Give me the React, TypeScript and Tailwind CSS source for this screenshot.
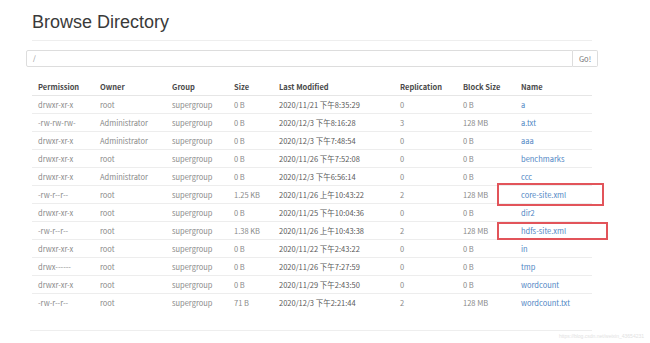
import React from "react";

interface Entry {
  permission: string;
  owner: string;
  group: string;
  size: string;
  modified: string;
  replication: string;
  blockSize: string;
  name: string;
  marked?: "wide" | "wider";
}

const entries: Entry[] = [
  { permission: "drwxr-xr-x", owner: "root", group: "supergroup", size: "0 B", modified: "2020/11/21 下午8:35:29", replication: "0", blockSize: "0 B", name: "a" },
  { permission: "-rw-rw-rw-", owner: "Administrator", group: "supergroup", size: "0 B", modified: "2020/12/3 下午8:16:28", replication: "3", blockSize: "128 MB", name: "a.txt" },
  { permission: "drwxr-xr-x", owner: "Administrator", group: "supergroup", size: "0 B", modified: "2020/12/3 下午7:48:54", replication: "0", blockSize: "0 B", name: "aaa" },
  { permission: "drwxr-xr-x", owner: "root", group: "supergroup", size: "0 B", modified: "2020/11/26 下午7:52:08", replication: "0", blockSize: "0 B", name: "benchmarks" },
  { permission: "drwxr-xr-x", owner: "Administrator", group: "supergroup", size: "0 B", modified: "2020/12/3 下午6:56:14", replication: "0", blockSize: "0 B", name: "ccc" },
  { permission: "-rw-r--r--", owner: "root", group: "supergroup", size: "1.25 KB", modified: "2020/11/26 上午10:43:22", replication: "2", blockSize: "128 MB", name: "core-site.xml", marked: "wide" },
  { permission: "drwxr-xr-x", owner: "root", group: "supergroup", size: "0 B", modified: "2020/11/25 下午10:04:36", replication: "0", blockSize: "0 B", name: "dir2" },
  { permission: "-rw-r--r--", owner: "root", group: "supergroup", size: "1.38 KB", modified: "2020/11/26 上午10:43:38", replication: "2", blockSize: "128 MB", name: "hdfs-site.xml", marked: "wider" },
  { permission: "drwxr-xr-x", owner: "root", group: "supergroup", size: "0 B", modified: "2020/11/22 下午2:43:22", replication: "0", blockSize: "0 B", name: "in" },
  { permission: "drwx------", owner: "root", group: "supergroup", size: "0 B", modified: "2020/11/26 下午7:27:59", replication: "0", blockSize: "0 B", name: "tmp" },
  { permission: "drwxr-xr-x", owner: "root", group: "supergroup", size: "0 B", modified: "2020/11/29 下午2:43:50", replication: "0", blockSize: "0 B", name: "wordcount" },
  { permission: "-rw-r--r--", owner: "root", group: "supergroup", size: "71 B", modified: "2020/12/3 下午2:21:44", replication: "2", blockSize: "128 MB", name: "wordcount.txt" },
];

const cols = "grid grid-cols-[62px_72px_62px_45px_121px_63px_58px_77px]";

const App: React.FC = () => {
  return (
    <div className="relative w-[650px] h-[343px] overflow-hidden bg-white font-['Noto_Sans_CJK_SC','Liberation_Sans',sans-serif]">
      <div className="ml-[26px] w-[572px]">
        {/* Heading */}
        <div className="ml-[6px] w-[560px] pt-[13px] pb-[9px] border-b border-[#eeeeee]">
          <h1 className="text-[18px] leading-[18px] text-[#3a3a3a] font-['Liberation_Sans',sans-serif]">
            Browse Directory
          </h1>
        </div>

        {/* Path input */}
        <div className="mt-[9px] flex h-[17px]">
          <div className="flex-1 flex items-center pl-[6px] border border-[#dddddd] rounded-l-[2px] text-[7px] text-[#888888]">
            /
          </div>
          <div className="w-[25px] flex items-center justify-center border border-l-0 border-[#dddddd] rounded-r-[2px] text-[7.5px] text-[#777777]">
            Go!
          </div>
        </div>

        {/* Listing */}
        <div className="ml-[6px] w-[560px] mt-[11px] text-[7.5px]">
          <div className={`${cols} h-[18px] items-center border-b border-[#e6e6e6] font-bold text-[#4a4a4a]`}>
            <div className="pl-[6px]">Permission</div>
            <div className="pl-[6px]">Owner</div>
            <div className="pl-[6px]">Group</div>
            <div className="pl-[6px]">Size</div>
            <div className="pl-[6px]">Last Modified</div>
            <div className="pl-[6px]">Replication</div>
            <div className="pl-[6px]">Block Size</div>
            <div className="pl-[6px]">Name</div>
          </div>
          {entries.map((e, index) => (
            <div
              key={e.name}
              className={`relative ${cols} h-[18px] items-center text-[#8a8a8a] ${
                index < entries.length - 1 ? "border-b border-[#ededed]" : ""
              }`}
            >
              <div className="pl-[6px]">{e.permission}</div>
              <div className="pl-[6px]">{e.owner}</div>
              <div className="pl-[6px]">{e.group}</div>
              <div className="pl-[6px]">{e.size}</div>
              <div className="pl-[6px] text-[#5a5a5a]">{e.modified}</div>
              <div className="pl-[6px]">{e.replication}</div>
              <div className="pl-[6px]">{e.blockSize}</div>
              <div className="pl-[6px] text-[#4f86c4]">{e.name}</div>
              {/* red annotation boxes drawn over the screenshot */}
              {e.marked === "wide" && (
                <div className="absolute z-10 left-[465px] top-[-3px] w-[107px] h-[23px] border-2 border-[#e2545a]" />
              )}
              {e.marked === "wider" && (
                <div className="absolute z-10 left-[465px] top-[0px] w-[111px] h-[18px] border-2 border-[#e2545a]" />
              )}
            </div>
          ))}
        </div>

        <div className="ml-[4px] w-[562px] mt-[18px] border-t border-[#eeeeee]" />
      </div>

      {/* watermark */}
      <div className="absolute right-[6px] bottom-[3px] text-[5px] text-[#e2e2e2] font-['Liberation_Sans',sans-serif]">
        https://blog.csdn.net/weixin_43654231
      </div>
    </div>
  );
};

export default App;
